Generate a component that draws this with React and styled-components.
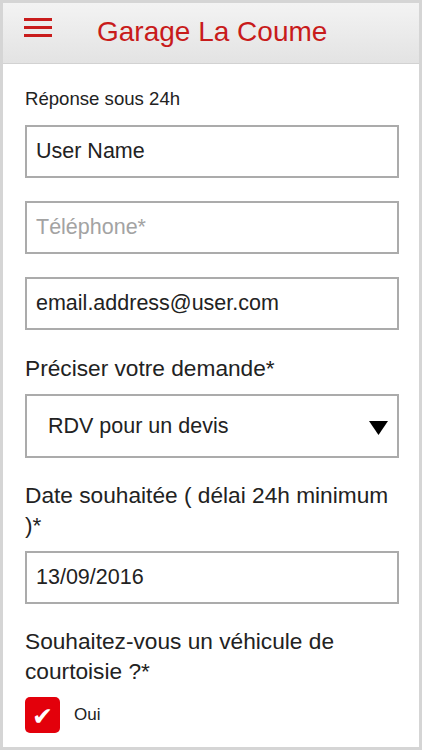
import React from 'react';
import styled, { createGlobalStyle } from 'styled-components';

const GlobalStyle = createGlobalStyle`
    html, body {
        margin: 0;
        padding: 0;
        background: #ffffff;
    }
    body {
        font-family: "Liberation Sans", Helvetica, Arial, sans-serif;
        color: #222;
    }
    * { box-sizing: border-box; }
`;

const Frame = styled.div`
    height: 100vh;
    border: 3px solid #d5d5d5;
    display: flex;
    flex-direction: column;
    overflow: hidden;
    background: #fff;
`;

const Header = styled.header`
    height: 61px;
    flex-shrink: 0;
    display: flex;
    align-items: center;
    padding-left: 21px;
    background: linear-gradient(#f3f3f3, #e3e3e3);
    border-bottom: 1px solid #d2d2d2;
`;

const Burger = styled.button`
    width: 28px;
    height: 19px;
    padding: 0;
    border: none;
    background: none;
    display: flex;
    flex-direction: column;
    justify-content: space-between;
    margin-top: -12px;
    cursor: pointer;

    span {
        display: block;
        height: 3px;
        width: 100%;
        background: #c91c1c;
    }
`;

const Title = styled.h1`
    margin: 0 0 0 45px;
    font-size: 28px;
    font-weight: normal;
    color: #c81b1b;
    line-height: 1;
    margin-top: -2px;
`;

const Content = styled.main`
    padding: 24px 20px 0 22px;
    display: flex;
    flex-direction: column;
`;

const Note = styled.p`
    margin: 0 0 15px;
    font-size: 18.6px;
    line-height: 22px;
    color: #222;
`;

const TextInput = styled.input`
    display: block;
    width: 100%;
    height: 53px;
    margin: 0 0 23px;
    padding: 0 9px;
    border: 2px solid #ababab;
    border-radius: 0;
    font-family: inherit;
    font-size: 21.5px;
    color: #222;
    background: #fff;
    outline: none;

    &::placeholder {
        color: #a3a3a3;
    }
`;

const Field = styled.div`
    margin-bottom: 22px;
`;

const Label = styled.label`
    display: block;
    margin-bottom: 11px;
    font-size: 22.7px;
    line-height: 30px;
    color: #222;
`;

const SelectWrap = styled.div`
    position: relative;
    height: 64px;

    svg {
        position: absolute;
        right: 11px;
        top: 27px;
        pointer-events: none;
    }
`;

const Select = styled.select`
    appearance: none;
    width: 100%;
    height: 100%;
    padding: 0 40px 0 21px;
    border: 2px solid #ababab;
    border-radius: 0;
    background: #fff;
    font-family: inherit;
    font-size: 21.5px;
    color: #222;
    outline: none;
`;

const CheckRow = styled.label`
    display: flex;
    align-items: center;
    gap: 14px;
    font-size: 17px;
    color: #222;
`;

const CheckBox = styled.span`
    width: 35px;
    height: 36px;
    border-radius: 5px;
    background: ${(p) => (p.checked ? '#e3000b' : '#fff')};
    display: flex;
    align-items: center;
    justify-content: center;
    color: #fff;
    font-family: "DejaVu Sans", sans-serif;
    font-size: 25px;
    line-height: 1;
    padding-top: 2px;
`;

function App() {
    return (
        <>
            <GlobalStyle />
            <Frame>
                <Header>
                    <Burger aria-label="Menu">
                        <span />
                        <span />
                        <span />
                    </Burger>
                    <Title>Garage La Coume</Title>
                </Header>

                <Content>
                    <Note>Réponse sous 24h</Note>

                    <TextInput type="text" defaultValue="User Name" />
                    <TextInput type="tel" placeholder="Téléphone*" />
                    <TextInput type="email" defaultValue="email.address@user.com" />

                    <Field>
                        <Label>Préciser votre demande*</Label>
                        <SelectWrap>
                            <Select defaultValue="devis">
                                <option value="devis">RDV pour un devis</option>
                                <option value="entretien">RDV pour un entretien</option>
                            </Select>
                            <svg width="19" height="14" viewBox="0 0 19 14">
                                <path d="M0 0 H19 L9.5 14 Z" fill="#000" />
                            </svg>
                        </SelectWrap>
                    </Field>

                    <Field>
                        <Label>Date souhaitée ( délai 24h minimum )*</Label>
                        <TextInput type="text" defaultValue="13/09/2016" style={{ marginBottom: 0 }} />
                    </Field>

                    <Field>
                        <Label>Souhaitez-vous un véhicule de courtoisie ?*</Label>
                        <CheckRow>
                            <CheckBox checked>✔</CheckBox>
                            Oui
                        </CheckRow>
                    </Field>
                </Content>
            </Frame>
        </>
    );
}

export default App;
